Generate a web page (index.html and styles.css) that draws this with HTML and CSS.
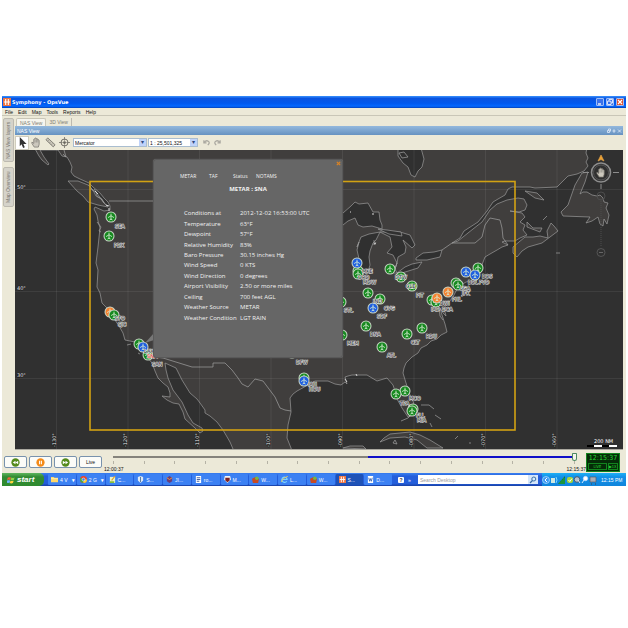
FILE: index.html
```html
<!DOCTYPE html>
<html lang="en">
<head>
<meta charset="utf-8">
<title>Symphony - OpsVue</title>
<link rel="stylesheet" href="styles.css">
</head>
<body>
<svg class="defs" aria-hidden="true">
  <symbol id="plane" viewBox="-6 -6 12 12">
    <circle r="5.5" fill="#c9d6c6"/><circle r="4.5" fill="currentColor"/>
    <path d="M0-3.3V3M-3 .6L0-1.2 3 .6M-1.5 3L0 2l1.5 1" fill="none" stroke="#d9efd6" stroke-width=".8"/>
  </symbol>
  <symbol id="logo" viewBox="0 0 9 9">
    <rect width="9" height="9" fill="#ee7440"/><path d="M3 1v3M6 1v3M1 4.500h7M3 5v3M6 5v3" stroke="#fff" stroke-width="1.200"/>
  </symbol>
  <symbol id="hand" viewBox="0 0 12 12">
    <path d="M3.500 11L1 7 1 5.500 3 7V2.500q.7-1 1.400 0V1.500q.8-1 1.500 0v.6q.8-.8 1.500.2v1q.9-.7 1.500.3V8L8 11z" fill="#ccc8bd" stroke="#77756d" stroke-width=".8"/>
    <path d="M4.500 3v3M6 2.500V6M7.500 3v3" stroke="#77756d" stroke-width=".5"/>
  </symbol>
</svg>

<main class="app">
  <header class="titlebar">
    <svg class="app-icon"><use href="#logo"/></svg>
    <h1>Symphony - OpsVue</h1>
    <div class="win-buttons">
      <button aria-label="Minimize"><svg viewBox="0 0 8 8"><path d="M2 6h3" stroke="#fff" stroke-width="1.300"/></svg></button>
      <button aria-label="Restore"><svg viewBox="0 0 8 8"><path d="M3 3V1.500h3.500V5H5M1.500 3.200H5v3.300H1.500z" fill="none" stroke="#fff" stroke-width=".8"/></svg></button>
      <button class="close" aria-label="Close"><svg viewBox="0 0 8 8"><path d="M2 2l4 4M6 2L2 6" stroke="#fff" stroke-width="1.200"/></svg></button>
    </div>
  </header>
  <nav class="menubar"><a href="#">File</a><a href="#">Edit</a><a href="#">Map</a><a href="#">Tools</a><a href="#">Reports</a><a href="#">Help</a></nav>

  <div class="body">
    <aside class="side"><button>NAS View layers</button><button>Map Overview</button></aside>
    <section class="content">
      <div class="view-tabs"><button class="on">NAS View</button><button>3D View</button></div>
      <div class="view-head"><h2>NAS View</h2>
        <svg viewBox="0 0 16 6"><path d="M1.500 2.500h2v2h-2zM2.500 2V1h2v2.500M6.500 3h3M8 1.200v3.600M12 1.500l3 3M15 1.500l-3 3" fill="none" stroke="#e4eefa" stroke-width=".8"/></svg>
      </div>
      <div class="toolbar">
        <button class="tool on" aria-label="Select"><svg viewBox="0 0 12 12"><path d="M3 0v10l2-2 1.700 4 1.800-.9L7 7.500h3.500z" fill="#333"/></svg></button>
        <button class="tool" aria-label="Pan"><svg viewBox="0 0 12 12"><use href="#hand"/></svg></button>
        <button class="tool" aria-label="Measure"><svg viewBox="0 0 12 12"><path d="M1 3l2-2 8 7.500-2 2.300z" fill="#cbc7ba" stroke="#66645d" stroke-width=".8"/><path d="M4 3.500L3 4.500M6 5.400L5 6.400M8 7.200L7 8.200" stroke="#555" stroke-width=".5"/></svg></button>
        <button class="tool" aria-label="Center"><svg viewBox="0 0 12 12"><circle cx="6" cy="6" r="3.800" fill="none" stroke="#66645d"/><circle cx="6" cy="6" r="1.500" fill="#66645d"/><path d="M6 0v4M6 8v4M0 6h4M8 6h4" stroke="#77756d" stroke-width=".9"/></svg></button>
        <span class="combo wide"><select aria-label="Projection"><option>Mercator</option></select></span>
        <span class="combo"><select aria-label="Scale"><option>1 : 25,501,325</option></select></span>
        <button class="hist" aria-label="Undo"><svg viewBox="0 0 8 8"><path d="M1 1.500v3h3M1.500 4Q3.500 1 6 2.500T5.500 7" fill="none" stroke="#aaa8a0" stroke-width="1.400"/></svg></button>
        <button class="hist" aria-label="Redo"><svg viewBox="0 0 8 8"><path d="M7 1.500v3H4M6.500 4Q4.500 1 2 2.500T2.500 7" fill="none" stroke="#aaa8a0" stroke-width="1.400"/></svg></button>
      </div>
      <div class="map">
        <svg class="chart" viewBox="15 150 608 299" role="img" aria-label="Airport map">
          <rect x="15" y="150" width="608" height="299" fill="#303030"/>
          <g class="land">
            <path d="M34 147L39 156L42 160L48 165L49 164L44 157L40 150L52 150L58 150L62 156L67 157L70 162L72 167L71 172L74 176L80 179L89 183L93 187L100 193L104 198L108 202L110 206L110 210L104 211L95 207L94 209L97 215L98 221L100 228L98 247L96 263L98 270L97 287L100 293L102 303L107 308L110 314L115 320L119 326L123 333L125 340L130 341L135 342L139 347L143 352L152 363L155 371L158 378L163 383L168 387L170 393L170 397L162 396L167 400L173 403L179 404L183 412L185 419L195 428L200 433L203 431L202 428L193 423L188 415L182 402L173 390L168 378L166 370L165 363L176 368L182 380L190 393L197 399L200 403L205 410L205 413L210 416L217 422L223 430L230 442L233 449L234 452L292 452L291 448L287 438L288 425L291 412L290 398L293 394L297 391L308 385L315 381L328 381L335 384L341 385L345 382L347 384L345 377L348 376L352 375L357 375L367 375L372 378L377 381L387 378L393 385L395 391L397 399L402 408L408 417L413 415L415 408L413 401L410 395L406 383L403 373L404 368L406 363L412 357L418 353L421 348L427 345L431 341L437 339L441 335L447 332L445 324L442 315L440 308L443 313L446 316L444 308L449 302L453 297L456 291L461 285L466 282L477 280L480 273L480 270L485 257L490 254L497 250L502 247L508 245L502 242L505 241L515 241L520 238L527 235L523 230L525 225L520 222L525 217L522 213L510 211L519 212L525 210L527 205L524 199L518 198L507 200L497 204L490 210L482 222L473 229L463 237L458 241L452 243L460 238L464 231L478 222L487 211L493 202L498 199L505 195L508 189L512 187L530 187L535 188L557 187L562 182L568 176L577 174L584 171L588 166L586 162L588 158L586 153L587 147Z"/>
            <path d="M68 181L78 181L88 185L93 190L96 196L101 199L108 207L98 205L88 202L83 196L77 191Z"/>
            <path d="M588 172L582 173L575 185L568 205L561 212L563 216L590 217L586 223L592 221L598 217L600 224L603 226L604 219L607 224L609 215L606 208L608 203L604 202L603 198L600 195L597 196L592 195L587 192L583 192L580 194L585 182Z"/>
            <path d="M513 247L525 237L533 237L540 236L548 238L547 231L551 223L554 226L558 231L550 237L542 243L528 247L522 251L517 257L513 253Z"/>
            <path d="M527 222L533 228L542 228L540 232L527 227ZM525 191L537 193L544 200L535 198ZM380 442L384 438L390 434L400 433L410 432L420 435L430 440L443 448L427 448L417 440L405 437L390 438ZM343 448L350 446L363 446L366 449Z"/>
          </g>
          <g class="water">
            <path d="M335 216L343 213L351 206L355 202L359 204L368 203L373 212L379 212L380 220L382 225L382 229L372 226L363 227L358 225L355 218L348 221L343 225L335 226Z"/>
            <path d="M360 263L357 250L359 242L357 247L361 237L369 234L380 232L376 240L373 243L370 251L369 257L370 265L368 272L361 271ZM380 232L400 232L410 235L415 245L412 248L403 240L406 247L405 253L398 257L397 263L395 269L397 273L405 267L412 264L422 262L418 268L402 273L393 273L397 263L393 255L387 253L392 247L390 237ZM416 258L423 253L434 252L442 250L440 257L427 260L416 260Z"/>
            <path d="M398 148L398 156L403 163L408 167L411 175L415 177L418 171L422 167L424 159L421 148ZM378 229L387 230L401 232L402 236L389 234Z"/>
          </g>
          <path class="line" d="M109 201H343M155 357L163 358L192 367L213 367V363H225L232 370L238 378L242 384L248 387L255 379L263 381L269 389L275 397L280 408L285 410L291 411M395 269L397 263M442 250L452 243H475L482 237L485 225L490 218L500 220L502 228L503 238L508 245M89 184L92 190L96 192L97 196L102 199L104 203L107 206M94 189L99 196L104 203M64 150L66 157L63 154M399 153L404 152L408 157L402 158ZM97 222L101 227L99 231L101 232M127 345L131 344M138 353L140 354M421 405H429L434 409M435 415L441 419M430 423L432 427M401 421L408 418L411 415M455 439L458 436M469 443H471M393 443L395 440L397 444ZM556 253H560M543 220L547 216M374 240V245L376 242M439 307L440 316L443 320"/>
          <path class="coarse" d="M95 191L98 194M106 205L109 206M109 208V211M345 379L347 382M356 374L357 376M350 212H351M372 214H374M374 243L376 244"/>
          <path class="grid" d="M56.500 150V449M128 150V449M199.500 150V449M271 150V449M342.500 150V449M414 150V449M485.500 150V449M557 150V449M15 189.500H623M15 291.500H623M15 378.500H623"/>
          <rect class="bounds" x="90" y="181.500" width="425" height="248.500"/>
          <g class="deg"><text x="17" y="189">50°</text><text x="17" y="290">40°</text><text x="17" y="377">30°</text>
            <text transform="translate(56 447) rotate(-90)">-130°</text><text transform="translate(127 447) rotate(-90)">-120°</text><text transform="translate(199 447) rotate(-90)">-110°</text><text transform="translate(270 447) rotate(-90)">-100°</text><text transform="translate(342 447) rotate(-90)">-090°</text><text transform="translate(413 447) rotate(-90)">-080°</text><text transform="translate(485 447) rotate(-90)">-070°</text><text transform="translate(556 447) rotate(-90)">-060°</text></g>
          <g class="green">
            <use href="#plane" x="105" y="211" width="12" height="12"/><use href="#plane" x="103" y="230" width="12" height="12"/>
            <use href="#plane" x="133" y="338" width="12" height="12"/><use href="#plane" x="142" y="349" width="12" height="12"/>
            <use href="#plane" x="352" y="265" width="12" height="12"/><use href="#plane" x="352" y="268" width="12" height="12"/>
            <use href="#plane" x="384" y="263" width="12" height="12"/><use href="#plane" x="395" y="271" width="12" height="12"/><use href="#plane" x="406" y="280" width="12" height="12"/>
            <use href="#plane" x="362" y="287" width="12" height="12"/><use href="#plane" x="374" y="293" width="12" height="12"/>
            <use href="#plane" x="360" y="320" width="12" height="12"/><use href="#plane" x="336" y="329" width="12" height="12"/><use href="#plane" x="335" y="296" width="12" height="12"/>
            <use href="#plane" x="376" y="341" width="12" height="12"/><use href="#plane" x="401" y="328" width="12" height="12"/><use href="#plane" x="416" y="322" width="12" height="12"/>
            <use href="#plane" x="399" y="385" width="12" height="12"/><use href="#plane" x="390" y="388" width="12" height="12"/><use href="#plane" x="407" y="403" width="12" height="12"/><use href="#plane" x="406" y="405" width="12" height="12"/>
            <use href="#plane" x="426" y="294" width="12" height="12"/><use href="#plane" x="430" y="296" width="12" height="12"/><use href="#plane" x="450" y="277" width="12" height="12"/><use href="#plane" x="452" y="279" width="12" height="12"/>
            <use href="#plane" x="472" y="262" width="12" height="12"/><use href="#plane" x="286" y="347" width="12" height="12"/><use href="#plane" x="298" y="372" width="12" height="12"/>
          </g>
          <g class="orange"><use href="#plane" x="104" y="306" width="12" height="12"/><use href="#plane" x="431" y="292" width="12" height="12"/><use href="#plane" x="442" y="286" width="12" height="12"/></g>
          <g class="green"><use href="#plane" x="108" y="309" width="12" height="12"/></g>
          <g class="blue"><use href="#plane" x="137" y="341" width="12" height="12"/><use href="#plane" x="351" y="257" width="12" height="12"/><use href="#plane" x="367" y="302" width="12" height="12"/><use href="#plane" x="298" y="375" width="12" height="12"/><use href="#plane" x="460" y="266" width="12" height="12"/><use href="#plane" x="469" y="269" width="12" height="12"/></g>
          <g class="codes">
            <text x="115" y="228">SEA</text><text x="114" y="247">PDX</text><text x="115" y="320">SFO</text><text x="118" y="326">SJC</text><text x="144" y="353">LAX</text><text x="152" y="366">SAN</text>
            <text x="362" y="273">MKE</text><text x="358" y="279">ORD</text><text x="363" y="284">MDW</text><text x="395" y="279">DTW</text><text x="406" y="288">CLE</text><text x="416" y="297">PIT</text>
            <text x="373" y="303">IND</text><text x="384" y="310">CVG</text><text x="377" y="318">SDF</text><text x="370" y="336">BNA</text><text x="347" y="345">MEM</text><text x="344" y="312">STL</text>
            <text x="387" y="357">ATL</text><text x="411" y="344">CLT</text><text x="426" y="338">RDU</text><text x="409" y="400">MCO</text><text x="400" y="405">TPA</text><text x="416" y="417">FLL</text><text x="417" y="422">MIA</text>
            <text x="431" y="311">IAD</text><text x="442" y="311">DCA</text><text x="440" y="305">BWI</text><text x="452" y="301">PHL</text><text x="460" y="290">LGA</text><text x="462" y="295">JFK</text><text x="468" y="284">BDL</text><text x="482" y="278">BOS</text><text x="479" y="284">PVD</text>
            <text x="296" y="364">DFW</text><text x="308" y="386">IAH</text><text x="309" y="391">HOU</text>
            <text class="alert" x="147" y="358">SNA</text>
          </g>
          <g fill="none" stroke="#8d8d8d">
            <path d="M601 155l-3 6 3-1.500 3 1.500z" fill="#f0a22e" stroke="#dca04b" stroke-width=".7"/>
            <circle cx="601" cy="172.500" r="9.500" stroke-width="1.600"/><circle cx="601" cy="172.500" r="7.500" stroke="#555"/>
            <use href="#hand" x="596" y="167" width="11" height="11"/>
            <path d="M613 172.500h6M601 184v5M583 172.500h6"/>
            <path d="M601 199v47" stroke="#4c4c4c" stroke-dasharray="1 1"/>
            <circle cx="601" cy="196" r="4" stroke="#4c4c4c"/><circle cx="601" cy="252.500" r="4" stroke="#555"/><path d="M599 252.500h4" stroke="#666"/>
          </g>
          <g class="scale"><text x="594" y="443">200 NM</text><path d="M587 446h30" stroke="#000" stroke-width="2"/><path d="M594 446h8M609 446h8" stroke="#fff" stroke-width="2"/></g>
        </svg>
        <svg class="pointer" viewBox="0 0 10 16"><path d="M10 1L1 11l9-3z" fill="#777"/></svg>
        <section class="popup">
          <button class="popup-close" aria-label="Close report"><svg viewBox="0 0 6 6"><path d="M1 1l4 4M5 1L1 5" stroke="#d98324" stroke-width="1.500"/></svg></button>
          <nav class="popup-tabs"><a href="#">METAR</a><a href="#">TAF</a><a href="#">Status</a><a href="#">NOTAMS</a></nav>
          <h3>METAR : SNA</h3>
          <table>
            <tr><th scope="row">Conditions at</th><td>2012-12-02 16:53:00 UTC</td></tr>
            <tr><th scope="row">Temperature</th><td>63°F</td></tr>
            <tr><th scope="row">Dewpoint</th><td>57°F</td></tr>
            <tr><th scope="row">Relative Humidity</th><td>83%</td></tr>
            <tr><th scope="row">Baro Pressure</th><td>30.15 inches Hg</td></tr>
            <tr><th scope="row">Wind Speed</th><td>0 KTS</td></tr>
            <tr><th scope="row">Wind Direction</th><td>0 degrees</td></tr>
            <tr><th scope="row">Airport Visibility</th><td>2.50 or more miles</td></tr>
            <tr><th scope="row">Ceiling</th><td>700 feet AGL</td></tr>
            <tr><th scope="row">Weather Source</th><td>METAR</td></tr>
            <tr><th scope="row">Weather Condition</th><td>LGT RAIN</td></tr>
          </table>
        </section>
      </div>
    </section>
  </div>

  <section class="playback">
    <div class="play-buttons">
      <button aria-label="Rewind"><svg viewBox="0 0 10 10"><circle cx="5" cy="5" r="4.600" fill="#548a1c"/><path d="M5 3L2 5l3 2zM8 3L5 5l3 2z" fill="#fff"/></svg></button>
      <button aria-label="Pause"><svg viewBox="0 0 10 10"><circle cx="5" cy="5" r="4.600" fill="#f58b18"/><path d="M4 3v4M6 3v4" stroke="#fff" stroke-width="1.200"/></svg></button>
      <button aria-label="Forward"><svg viewBox="0 0 10 10"><circle cx="5" cy="5" r="4.600" fill="#548a1c"/><path d="M5 3l3 2-3 2zM2 3l3 2-3 2z" fill="#fff"/></svg></button>
      <button>Live</button>
    </div>
    <div class="timeline">
      <input type="range" aria-label="Playback time" min="0" max="100" value="100">
      <div class="ticks"><i></i><i></i><i></i><i></i><i></i><i></i><i></i><i></i><i></i><i></i><i></i><i></i><i></i><i></i><i></i><i></i></div>
      <div class="times"><span>12:00:37</span><span>12:15:37</span></div>
    </div>
    <div class="clock"><time>12:15:37</time><div><span>LIVE</span><span>▶1X</span></div></div>
  </section>

  <footer class="taskbar">
    <button class="start"><svg viewBox="0 0 10 10"><path d="M1 2q2-1 4 0L4 5Q2 4 0 5z" fill="#f0623a"/><path d="M5.500 2q2 1 4 0l-1 3q-2 1-4 0z" fill="#8fd34a"/><path d="M0 5.700q2-1 4 0L3 9q-1.500-1-3.500 0z" fill="#6db3ff"/><path d="M4.400 5.900q2 1 4 0l-1 3q-2 1-4 0z" fill="#ffd33d"/></svg>start</button>
    <div class="tasks">
      <button><svg viewBox="0 0 8 8"><path d="M0 1h3l1 1h4v5H0z" fill="#ffd76a"/><path d="M0 3h8" stroke="#fff0b0"/></svg>4 V<b>▾</b></button>
      <button><svg viewBox="0 0 8 8"><circle cx="4" cy="4" r="4" fill="#e8442f"/><path d="M4 4L.6 2A4 4 0 0 0 4 8z" fill="#3fae49"/><path d="M4 4h4a4 4 0 0 1-4 4z" fill="#fbd23c"/><circle cx="4" cy="4" r="1.700" fill="#3f81e8" stroke="#fff" stroke-width=".6"/></svg>2 G<b>▾</b></button>
      <button><svg viewBox="0 0 8 8"><path d="M1 1h6v7H1z" fill="#e9f2c9"/><path d="M7 0L3 5" stroke="#e29a22" stroke-width="1.200"/><path d="M1 6h5v2H1z" fill="#83bd3a"/></svg>C...</button>
      <button><svg viewBox="0 0 8 8"><path d="M1 1l3-1 3 1v4L4 8 1 5z" fill="#dfe9f5"/><path d="M4 1v6" stroke="#496e97"/></svg>S...</button>
      <button><svg viewBox="0 0 8 8"><path d="M1 2l3-2 3 2v4L4 8 1 6z" fill="#6b3c76"/><path d="M1 2l3 2 3-2" stroke="#f4a13c" fill="none"/></svg>JI...</button>
      <button><svg viewBox="0 0 8 8"><path d="M1 0h6v8H1z" fill="#fff"/><path d="M2 2h4M2 4h4M2 6h3" stroke="#344f91" stroke-width="1"/></svg>ro...</button>
      <button><svg viewBox="0 0 8 8"><path d="M1 0h6l1 4-4 4-4-4z" fill="#f3f3f3"/><path d="M1.500 2h5v3L4 7 1.500 5z" fill="#7b2226"/></svg>M...</button>
      <button><svg viewBox="0 0 8 8"><path d="M0 3l4-2 4 2-1 5H1z" fill="#c74b22"/><circle cx="5.500" cy="2.500" r="2" fill="#72b844"/></svg>W...</button>
      <button><svg viewBox="0 0 8 8"><path d="M6.500 6A3 3 0 1 1 7 4H2" fill="none" stroke="#7bd2ff" stroke-width="1.400"/><path d="M0 7Q1 3 8 0" stroke="#ffce42" stroke-width=".9" fill="none"/></svg>L...</button>
      <button><svg viewBox="0 0 8 8"><path d="M0 3l4-2 4 2-1 5H1z" fill="#c74b22"/><circle cx="5.500" cy="2.500" r="2" fill="#72b844"/></svg>W...</button>
      <button class="on"><svg viewBox="0 0 8 8"><use href="#logo" width="8" height="8"/></svg>S...</button>
      <button><svg viewBox="0 0 8 8"><path d="M1 0h6v8H1z" fill="#fff"/><path d="M2 2l1 4 1-3 1 3 1-4" stroke="#2a55a5" fill="none" stroke-width=".9"/></svg>D...</button>
    </div>
    <div class="extras"><span class="help">?</span><span>»</span></div>
    <form class="search"><input type="text" aria-label="Search Desktop" placeholder="Search Desktop"><button type="button" aria-label="Search"><svg viewBox="0 0 8 8"><circle cx="4.800" cy="3" r="2" fill="#d4ecff" stroke="#3a6ea5"/><path d="M3.500 4.500L1 7" stroke="#3a6ea5" stroke-width="1.300"/></svg></button></form>
    <div class="tray">
      <svg viewBox="0 0 56 10"><circle cx="4" cy="5" r="3.500" fill="#3d9bf5" stroke="#b9e0ff" stroke-width=".7"/><path d="M5 3L3 5l2 2" fill="none" stroke="#fff"/><path d="M9 3h4v5H9z" fill="#cfe8e0"/><path d="M14 2q2 3 0 6" stroke="#7dd8ff" fill="none"/><path d="M16 9l7-8v8z" fill="#157c35"/><path d="M18 9V7M20 9V5M22 9V3" stroke="#1fae45"/><rect x="25" y="2" width="6" height="6" rx="2" fill="#a7d438"/><path d="M26.500 5l1.300 1.500L30 3.500" stroke="#fff" fill="none"/><circle cx="35" cy="4.500" r="2.800" fill="#b7c2cf" stroke="#4d5b70"/><path d="M36 5l2 3" stroke="#e7e7e7"/><circle cx="43.500" cy="3.500" r="2.200" fill="#fff" stroke="#bcd9ff" stroke-width=".7"/><path d="M42 5l-2 3" stroke="#d8e9ff"/><path d="M48 2h6v5h-6z" fill="#a9adb5" stroke="#555d6c" stroke-width=".7"/><path d="M49 9h1M53 9h1" stroke="#444"/></svg>
      <time>12:15 PM</time>
    </div>
  </footer>
</main>
</body>
</html>
```

FILE: styles.css
```css
* { box-sizing: border-box; }
body {
  margin: 0;
  padding: 96px 2px;
  background: #fff;
  color: #111;
  font: 5px/6px "Liberation Sans", Arial, sans-serif;
}
button, input, select { font: inherit; color: inherit; margin: 0; padding: 0; border: 0; background: none; }
h1, h2, h3 { margin: 0; font-size: inherit; }
a { color: inherit; text-decoration: none; }
svg { display: block; }
.defs { position: absolute; width: 0; height: 0; }
.app { background: #ece9d8; }

.titlebar {
  display: flex; align-items: center; gap: 1px; height: 12px; padding: 0 2px 0 1px;
  background: linear-gradient(#3a93ff 0, #0a54e0 20%, #0058ee 60%, #0468ff 85%, #0340b8);
  color: #fff; font-family: "DejaVu Sans", sans-serif;
}
.app-icon { width: 8px; height: 8px; }
.win-buttons { display: flex; gap: 2px; margin-left: auto; }
.win-buttons button { width: 8px; height: 8px; border-radius: 1px; background: #3b72ea; outline: 1px solid #9dbdf5; outline-offset: -1px; }
.win-buttons .close { background: #e0502c; }

.menubar { display: flex; gap: 5px; height: 8px; padding-left: 3px; align-items: center; border-bottom: 1px solid #c9c6b7; }

.body { display: flex; padding-right: 3px; }
.side { width: 13px; padding: 2px 1px; display: flex; flex-direction: column; gap: 5px; flex: none; }
.side button {
  writing-mode: vertical-rl; transform: rotate(180deg); width: 11px; height: 44px; line-height: 9px;
  background: #d5d3ca; border: 1px solid #bdbab0; border-radius: 2px; color: #77756e;
}
.side button + button { height: 40px; }
.content { flex: 1; min-width: 0; }
.view-tabs { display: flex; height: 10px; padding: 2px 0 0 1px; }
.view-tabs button { padding: 0 3px; color: #817e74; border-right: 1px solid #bdbab0; }
.view-tabs .on { background: #f6f5ee; border: 1px solid #c9c6b7; border-bottom: 0; border-radius: 2px 2px 0 0; }
.view-head {
  display: flex; justify-content: space-between; align-items: center; height: 9px; padding: 0 1px 0 2px;
  background: linear-gradient(#93b8dd, #6692c1); color: #fff;
}
.view-head h2 { font-weight: 400; }
.view-head svg { width: 16px; height: 6px; }
.toolbar { display: flex; align-items: center; height: 15px; padding-left: 0; }
.tool { width: 14px; height: 14px; display: grid; place-items: center; }
.tool svg { width: 11px; height: 11px; }
.tool.on { background: #fff; outline: 1px solid #cfccbd; outline-offset: -1px; }
.combo { position: relative; width: 50px; height: 9px; margin-left: 1px; background: #fff; border: 1px solid #a9bdd0; }
.combo.wide { width: 74px; margin-left: 2px; }
.combo select { display: block; appearance: none; width: 100%; height: 7px; padding-left: 1px; border-radius: 0; outline: 0; }
.combo::after {
  content: "▾"; position: absolute; right: 0; top: 0; width: 7px; height: 7px;
  background: #c0d3fa; color: #30477c; text-align: center; line-height: 7px; font-size: 6px; pointer-events: none;
}
.hist { width: 7px; height: 7px; margin-left: 4px; }
.hist svg { width: 7px; height: 7px; }
.combo + .hist { margin-left: 5px; }

.map { position: relative; border-bottom: 1px solid #aaa89f; }
.chart { width: 100%; height: auto; overflow: hidden; font-family: "DejaVu Sans", sans-serif; font-size: 5px; }
.land path { fill: #403e3d; stroke: #9b9b9b; stroke-width: .7; }
.water path { fill: #303030; stroke: #9b9b9b; stroke-width: .7; }
.line { fill: none; stroke: #a2a2a2; stroke-width: .7; }
.coarse { fill: none; stroke: #d8d8d8; }
.grid { fill: none; stroke: #fff; stroke-opacity: .07; }
.bounds { fill: none; stroke: #d2a213; stroke-width: 1.600; }
.green { color: #16891f; }
.blue { color: #1f5fe0; }
.orange { color: #f58230; }
.deg text { fill: #f2f2f2; stroke: #191919; stroke-width: 1; paint-order: stroke; }
.codes text { fill: #1c1c1c; stroke: #e6e6e6; stroke-width: 1; paint-order: stroke; }
.codes .alert { fill: #e02020; stroke: #f3dede; }
.scale text { fill: #fff; }

.pointer { position: absolute; left: 21%; top: 61%; width: 12px; height: 16px; }
.popup {
  position: absolute; left: 138px; top: 9px; width: 190px; height: 199px; padding: 13px 20px 0 30px;
  background: #666; border: 1px solid #595959; border-radius: 3px; color: #f2f2f2; box-shadow: 0 0 1px #777;
  font-family: "Open Sans", "Noto Sans", sans-serif;
}
.popup-close { position: absolute; right: 1px; top: 1px; width: 5px; height: 5px; }
.popup-tabs { display: grid; grid-template-columns: 29px 24px 23px 30px; margin-left: -4px; }
.popup h3 { margin: 6px 0 15px; padding-right: 10px; text-align: center; font-size: 6px; line-height: 8px; }
.popup table { height: 115px; border-collapse: collapse; font-size: 6px; line-height: 8px; }
.popup th, .popup td { padding: 0; font-weight: 400; text-align: left; white-space: nowrap; }
.popup th { width: 56px; }

.playback { display: flex; height: 23px; padding: 0 6px 0 2px; }
.play-buttons { display: flex; gap: 2px; padding-top: 6px; }
.play-buttons button {
  display: grid; place-items: center; width: 23px; height: 12px;
  background: #fcfcf8; border: 1px solid #7892ad; border-radius: 2px;
}
.play-buttons svg { width: 9px; height: 9px; }
.timeline { flex: 1; padding: 3px 9px 0 11px; }
.timeline input { display: block; appearance: none; width: 100%; height: 8px; background: linear-gradient(90deg, #85837c 55%, #1010c8 55%) center / 100% 2px no-repeat; }
.timeline input::-webkit-slider-thumb { appearance: none; width: 5px; height: 8px; background: #f5f5ee; border: 1px solid #4d8a62; border-radius: 1px 1px 3px 3px; }
.ticks { display: flex; justify-content: space-between; height: 4px; padding: 0 2px 0 0; }
.ticks i { width: 1px; height: 3px; background: #b5b2a5; }
.times { display: flex; justify-content: space-between; margin: 1px -9px 0; }
.clock {
  display: flex; flex-direction: column; justify-content: space-between; width: 34px; height: 19px; margin-top: 3px;
  background: #052b08; border: 1px solid #12851e; color: #25dc35; text-align: center;
  font-family: "DejaVu Sans Condensed", "DejaVu Sans", sans-serif;
}
.clock time { font-size: 7px; line-height: 9px; }
.clock div { display: flex; gap: 1px; padding: 0 1px 1px; font-size: 4px; line-height: 5px; white-space: nowrap; }
.clock span { flex: 1; border: 1px solid #12851e; }
.clock span:first-child { flex: 2; }

.taskbar { display: flex; align-items: center; height: 13px; background: linear-gradient(#3a80f0, #245edb 25%, #245edb 80%, #1941a5); color: #fff; }
.start {
  display: flex; align-items: center; gap: 2px; width: 42px; height: 13px; padding-left: 5px;
  background: linear-gradient(#5eb55e, #328a32 30%, #2f8b2f); border-radius: 0 5px 5px 0;
  font-size: 8px; font-weight: 700; font-style: italic; line-height: 10px;
}
.start svg { width: 8px; height: 8px; }
.tasks { display: grid; grid-template-columns: repeat(12, 1fr); gap: 1px; flex: 344; min-width: 0; margin-left: 4px; }
.tasks button { display: flex; align-items: center; gap: 2px; height: 11px; padding-left: 3px; min-width: 0; border-radius: 1px; background: #3c81f3; white-space: nowrap; }
.tasks svg { width: 7px; height: 7px; flex: none; }
.tasks b { margin-left: auto; padding-right: 1px; }
.tasks .on { background: #1e52b7; }
.extras { display: flex; gap: 4px; width: 20px; margin-left: 6px; }
.help { width: 6px; background: #fff; color: #333; text-align: center; font-weight: 700; border-radius: 1px; }
.search { display: flex; flex: 120; height: 9px; min-width: 0; background: #fff; }
.search input { flex: 1; min-width: 0; padding-left: 2px; }
.search input::placeholder { color: #9b9b9b; }
.search button { width: 10px; background: #d5e6fa; display: grid; place-items: center; }
.search svg { width: 8px; height: 8px; }
.tray { display: flex; align-items: center; gap: 3px; width: 84px; height: 13px; margin-left: 4px; background: linear-gradient(#1cb0f5, #1290e8 30%, #0f85dc); }
.tray svg { width: 56px; height: 10px; }
.tray time { white-space: nowrap; }
```
